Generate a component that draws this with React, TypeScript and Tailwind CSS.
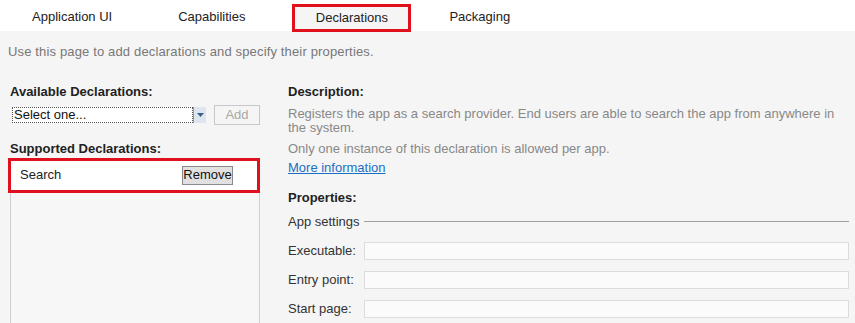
import React from "react";

const font = { fontFamily: '"Liberation Sans", Arial, sans-serif' };

function Tab({ label, active }: { label: string; active?: boolean }) {
  return (
    <div
      className={
        active
          ? "w-[119px] h-[28px] mt-[4px] flex items-center justify-center border-[3px] border-[#e0101c] bg-[#f5f5f5]"
          : "flex items-center justify-center h-[34px]"
      }
    >
      <span className="text-[13px] text-[#222]">{label}</span>
    </div>
  );
}

function Field({ label }: { label: string }) {
  return (
    <div className="flex items-center h-[18px]">
      <span className="w-[76px] text-[13px] text-[#333]">{label}</span>
      <div className="flex-1 h-[18px] bg-[#fbfbfb] border border-[#dcdcdc]" />
    </div>
  );
}

export default function App() {
  return (
    <div className="w-[855px] h-[323px] bg-[#f5f5f5] overflow-hidden" style={font}>
      <div className="h-[31px] bg-white flex items-start">
        <div className="ml-[32px] h-[34px] flex items-center">
          <Tab label="Application UI" />
        </div>
        <div className="ml-[66px] h-[34px] flex items-center">
          <Tab label="Capabilities" />
        </div>
        <div className="ml-[47px]">
          <Tab label="Declarations" active />
        </div>
        <div className="ml-[38px] h-[34px] flex items-center">
          <Tab label="Packaging" />
        </div>
      </div>
      <div className="pl-[8px] pt-[11px] text-[13px] text-[#777] tracking-[0.15px]">
        Use this page to add declarations and specify their properties.
      </div>
      <div className="flex mt-[20px]">
        <div className="w-[260px] pl-[10px] flex flex-col">
          <div className="text-[13px] font-bold text-[#222] h-[16px]">Available Declarations:</div>
          <div className="flex items-center mt-[7px] ml-[2px] h-[20px]">
            <div className="w-[181px] h-[16px] bg-white border border-dotted border-[#555] flex items-center pl-[1px]">
              <span className="text-[13px] text-[#111] leading-none">Select one...</span>
            </div>
            <div className="w-[13px] h-[16px] bg-[#dde6ef] border-l border-[#7aa0c8] flex items-center justify-center">
              <svg width="7" height="4" viewBox="0 0 7 4">
                <path d="M0 0 L7 0 L3.5 4 Z" fill="#3a5f8c" />
              </svg>
            </div>
            <div className="ml-[8px] w-[46px] h-[20px] border border-[#c8c8c8] bg-[#f5f5f5] flex items-center justify-center">
              <span className="text-[13px] text-[#a8a8a8]">Add</span>
            </div>
          </div>
          <div className="text-[13px] font-bold text-[#222] h-[16px] mt-[14px]">Supported Declarations:</div>
          <div className="-ml-[2px] mt-[3px] h-[35px] border-[3px] border-[#e0101c] bg-white flex items-center pl-[9px] pr-[24px] justify-between">
            <span className="text-[13px] text-[#222]">Search</span>
            <div className="w-[51px] h-[19px] bg-[#e1e1e1] border border-[#8a8a8a] flex items-center justify-center">
              <span className="text-[13px] text-[#111]">Remove</span>
            </div>
          </div>
          <div className="h-[140px] border-x border-[#cfcfcf] bg-[#f7f7f7]" />
        </div>
        <div className="flex-1 pl-[28px] pr-[6px] flex flex-col">
          <div className="text-[13px] font-bold text-[#222] h-[16px]">Description:</div>
          <div className="text-[13px] text-[#888] leading-[14px] mt-[9px]">
            Registers the app as a search provider. End users are able to search the app from anywhere in
            the system.
          </div>
          <div className="text-[13px] text-[#888] leading-[14px] mt-[7px]">
            Only one instance of this declaration is allowed per app.
          </div>
          <div className="text-[13px] text-[#1a6fc4] underline leading-[14px] mt-[5px]">More information</div>
          <div className="text-[13px] font-bold text-[#222] h-[16px] mt-[13px]">Properties:</div>
          <div className="flex items-center mt-[10px] h-[16px]">
            <span className="text-[13px] text-[#333]">App settings</span>
            <div className="flex-1 h-px bg-[#a0a0a0] ml-[4px]" />
          </div>
          <div className="flex flex-col gap-[11px] mt-[12px]">
            <Field label="Executable:" />
            <Field label="Entry point:" />
            <Field label="Start page:" />
          </div>
        </div>
      </div>
    </div>
  );
}
